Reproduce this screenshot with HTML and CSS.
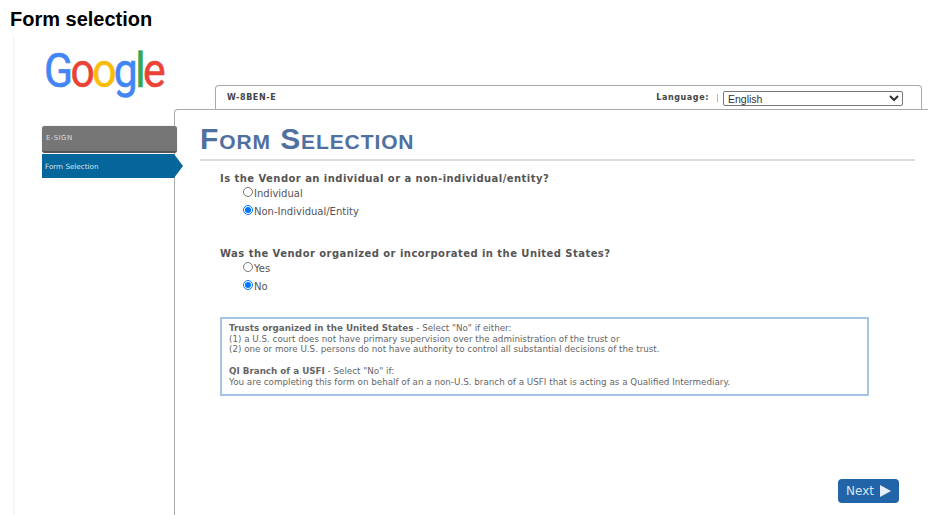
FILE: index.html
```html
<!DOCTYPE html>
<html lang="en">
<head>
    <meta charset="UTF-8">
    <meta name="viewport" content="width=device-width, initial-scale=1.0">
    <title>Form selection</title>
    <link rel="stylesheet" href="styles.css">
</head>
<body>
<h1 class="page-title">Form selection</h1>

<div class="shot">
    <aside class="sidebar">
        <div class="logo"><div class="logo-word"><span class="blue">G</span><span class="red">o</span><span class="yellow">o</span><span class="blue">g</span><span class="green">l</span><span class="red">e</span></div></div>
        <div class="nav-head">E-SIGN</div>
        <div class="nav-item">Form Selection</div>
    </aside>

    <div class="content">
        <div class="tabbar">
            <span class="form-name">W-8BEN-E</span>
            <span class="lang-label">Language:</span>
            <span class="lang-sep"></span>
            <select class="lang-select"><option>English</option></select>
        </div>

        <main class="panel">
            <h2 class="form-title">Form Selection</h2>

            <section class="question">
                <h3>Is the Vendor an individual or a non-individual/entity?</h3>
                <label class="choice"><input type="radio" name="kind">Individual</label>
                <label class="choice"><input type="radio" name="kind" checked>Non-Individual/Entity</label>
            </section>

            <section class="question">
                <h3>Was the Vendor organized or incorporated in the United States?</h3>
                <label class="choice"><input type="radio" name="us">Yes</label>
                <label class="choice"><input type="radio" name="us" checked>No</label>
            </section>

            <div class="notes">
                <p><strong>Trusts organized in the United States</strong> - Select "No" if either:<br>
                (1) a U.S. court does not have primary supervision over the administration of the trust or<br>
                (2) one or more U.S. persons do not have authority to control all substantial decisions of the trust.</p>
                <p><strong>QI Branch of a USFI</strong> - Select "No" if:<br>
                You are completing this form on behalf of an a non-U.S. branch of a USFI that is acting as a Qualified Intermediary.</p>
            </div>

            <button class="next-btn">Next <span class="next-arrow"></span></button>
        </main>
    </div>
</div>
</body>
</html>
```

FILE: styles.css
```css
html, body { height: 100%; }
body { margin: 0; background: #fff; display: flex; flex-direction: column; overflow: hidden; font-family: "DejaVu Sans", sans-serif; color: #555; }

.page-title { margin: 0; padding: 9px 0 0 10px; height: 28px; font: bold 20px/20px "Liberation Sans", Arial, sans-serif; color: #000; box-sizing: content-box; }

.shot { flex: 1; display: flex; margin-left: 13px; border-left: 2px solid #f6f6f6; min-height: 0; }

.sidebar { width: 159px; flex: none; position: relative; z-index: 2; }
.logo { height: 89px; padding-left: 29px; box-sizing: border-box; }
.logo-word { width: 160px; font: 400 49px/68px Roboto, sans-serif; letter-spacing: -3px; transform: scaleX(0.87); transform-origin: left top; -webkit-text-stroke: 0.6px currentColor; }
.blue { color: #4285f4; }
.red { color: #ea4335; }
.yellow { color: #fbbc05; }
.green { color: #34a853; }

.nav-head { margin: 0 -3px 0 27px; height: 27px; padding-left: 4px; background: #767676; border-bottom: 2px solid #555; border-radius: 3px; box-shadow: 0 0 1px #999; font-size: 7px; line-height: 24px; letter-spacing: 0.4px; color: #ddd; box-sizing: border-box; }
.nav-item { margin: 1px 0 0 27px; height: 24px; padding-left: 3px; background: #05669b; position: relative; font-size: 7.2px; line-height: 25px; color: #d5e3ec; }
.nav-item::after { content: ""; position: absolute; left: 100%; top: 0; border-left: 9px solid #05669b; border-top: 12px solid transparent; border-bottom: 12px solid transparent; }

.content { flex: 1; display: flex; flex-direction: column; padding-top: 48px; min-width: 0; }

.tabbar { margin: 0 6px 0 41px; height: 24px; flex: none; display: flex; align-items: center; padding: 0 18px 0 11px; border: 1px solid #aaa; border-bottom: 0; border-radius: 4px 4px 0 0; box-sizing: border-box; font-size: 8px; font-weight: bold; letter-spacing: 0.6px; color: #444; }
.form-name { flex: 1; }
.lang-sep { width: 1px; height: 8px; margin: 0 5px 0 8px; background: #bbb; }
.lang-select { width: 180px; height: 15px; margin-top: 1px; padding: 0; font: 10.5px "Liberation Sans", Arial, sans-serif; letter-spacing: 0; color: #333; background: #fff; border: 1px solid #777; border-radius: 2px; }

.panel { flex: 1; display: flex; flex-direction: column; padding: 14px 29px 12px 25px; border: 1px solid #aaa; border-width: 1px 0 0 1px; border-radius: 4px 0 0 0; min-height: 0; }

.form-title { margin: 0 -16px 0 0; height: 37px; border-bottom: 2px solid #ddd; box-sizing: border-box; font: bold 30px/30px "Liberation Sans", Arial, sans-serif; font-variant: small-caps; letter-spacing: 0.9px; color: #50709f; }

.question { margin: 13px 0 0 20px; height: 62px; }
.question h3 { margin: 0; font-size: 10px; line-height: 10px; font-weight: bold; letter-spacing: 0.45px; color: #555; }
.choice { display: flex; align-items: center; height: 18px; margin-left: 23px; font-size: 10px; color: #555; }
.choice input { width: 10px; height: 10px; margin: -2px 1px 0 0; }

.notes { margin: 6px 30px 0 20px; height: 79px; padding: 4px 7px; border: 2px solid #a6c4e4; box-sizing: border-box; font-size: 8.75px; line-height: 10.7px; color: #666; }
.notes p { margin: 0 0 10.7px; }

.next-btn { margin-top: auto; align-self: flex-end; width: 61px; height: 24px; padding: 0; border: 0; border-radius: 4px; background: #2164a8; color: #d4e4f3; font: 12px "DejaVu Sans", sans-serif; display: flex; align-items: center; justify-content: center; gap: 6px; }
.next-arrow { border-left: 11px solid #e6eff8; border-top: 6px solid transparent; border-bottom: 6px solid transparent; }
```
